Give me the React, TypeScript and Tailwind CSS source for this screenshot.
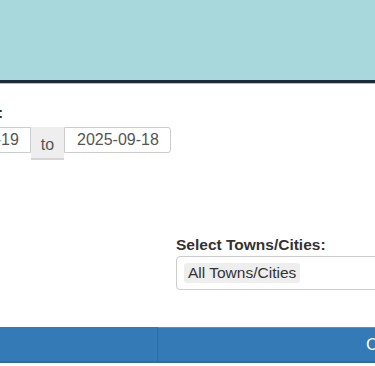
import React from "react";

export default function App() {
  return (
    <div
      className="w-[375px] h-[366px] overflow-hidden bg-white text-[#333]"
      style={{ fontFamily: '"Liberation Sans", Arial, sans-serif' }}
    >
      <header className="h-[80px] bg-[#a8d8dc]" />
      <div className="h-[3px] bg-[#1b2a3b]" />
      <div className="h-px bg-[#b9bec4]" />

      <div className="ml-[-76px] w-[600px]">
        <div className="ml-[-6px] pt-[20px] text-[15.5px] font-bold leading-[18px] text-[#333]">
          Date range:
        </div>
        <div className="mt-[5px] flex items-start">
          <div className="flex h-[26px] w-[107px] items-center rounded-l-[3px] border border-[#ccc] bg-white pl-[12px] text-[16px] text-[#555]">
            2025-09-19
          </div>
          <div className="flex h-[33px] w-[33px] items-center justify-center border-b-[2px] border-[#d6d6d6] bg-[#eee] pt-[5px] text-[16px] text-[#555]">
            to
          </div>
          <div className="flex h-[26px] w-[107px] items-center rounded-r-[3px] border border-[#ccc] bg-white pl-[12px] text-[16px] text-[#555]">
            2025-09-18
          </div>
        </div>
      </div>

      <div className="ml-[176px] mt-[76px] w-[300px]">
        <div className="text-[15.5px] font-bold leading-[18px] text-[#333] whitespace-nowrap">
          Select Towns/Cities:
        </div>
        <div className="mt-[2px] flex h-[34px] items-center rounded-[4px] border-[1.5px] border-[#ccc] bg-white pl-[7px]">
          <span className="flex h-[20px] items-center rounded-[3px] bg-[#eeeeee] px-[4px] text-[15.5px] text-[#333] whitespace-nowrap">
            All Towns/Cities
          </span>
        </div>
      </div>

      <div className="mt-[37px] flex h-[36px] w-[500px]">
        <div className="h-full w-[158px] border-r border-b-2 border-[#2e6da4] bg-[#337ab7]" />
        <div className="flex h-full flex-1 items-center border-t border-b-2 border-t-[#5b8fc4] border-b-[#2e6da4] bg-[#337ab7] pl-[208px] text-[17px] text-white whitespace-nowrap">
          Clear Filters
        </div>
      </div>
    </div>
  );
}
